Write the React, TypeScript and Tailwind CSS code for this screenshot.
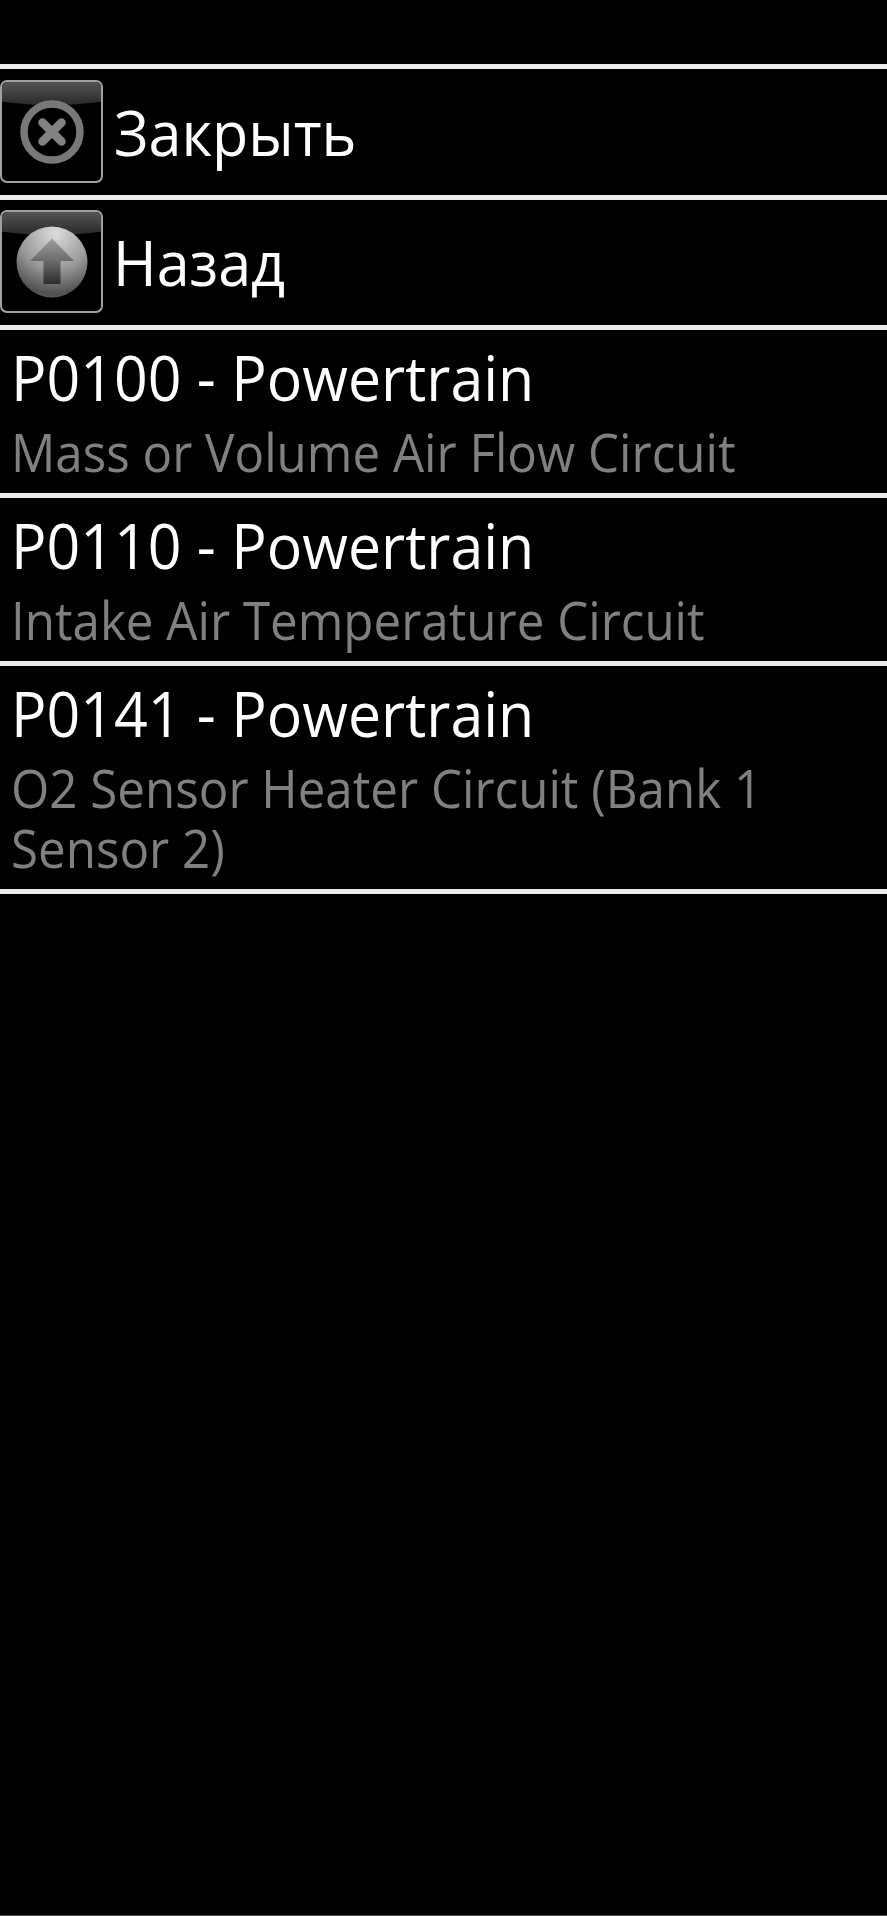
const rows = [
  { code: "P0100 - Powertrain", desc: "Mass or Volume Air Flow Circuit" },
  { code: "P0110 - Powertrain", desc: "Intake Air Temperature Circuit" },
  { code: "P0141 - Powertrain", desc: "O2 Sensor Heater Circuit (Bank 1 Sensor 2)" },
];

function CloseIcon() {
  return (
    <svg width="70" height="70" viewBox="0 0 70 70" className="blur-[0.5px]">
      <circle cx="35" cy="35" r="28" fill="none" stroke="#787878" strokeWidth="7.5" />
      <path d="M25.5 25.5 L44.5 44.5 M44.5 25.5 L25.5 44.5" stroke="#828282" strokeWidth="8.5" strokeLinecap="round" />
    </svg>
  );
}

function UpIcon() {
  return (
    <svg width="74" height="74" viewBox="0 0 74 74" className="blur-[0.5px]">
      <defs>
        <radialGradient id="ball" cx="0.55" cy="0.1" r="1">
          <stop offset="0" stopColor="#dcdcdc" />
          <stop offset="0.5" stopColor="#9a9a9a" />
          <stop offset="0.85" stopColor="#505050" />
          <stop offset="1" stopColor="#707070" />
        </radialGradient>
        <linearGradient id="arrow" x1="0" y1="0" x2="0" y2="1">
          <stop offset="0" stopColor="#a0a0a0" />
          <stop offset="0.5" stopColor="#6a6a6a" />
          <stop offset="1" stopColor="#2c2c2c" />
        </linearGradient>
      </defs>
      <circle cx="37" cy="37" r="35.5" fill="url(#ball)" />
      <path d="M37 13.5 L59 36 H45.5 V59 H28.5 V36 H15 Z" fill="url(#arrow)" />
    </svg>
  );
}

export default function App() {
  return (
    <div className="h-[1920px] flex flex-col bg-black font-['Open_Sans','Noto_Sans',sans-serif] overflow-hidden">
      <div className="h-[64px] border-b-[5px] border-[#ececec] box-content" />
      {[
        { label: "Закрыть", icon: <CloseIcon />, row: "h-[125px] pb-[1px]", gap: "ml-[11px]" },
        { label: "Назад", icon: <UpIcon />, row: "h-[123px] pb-[2px]", gap: "ml-[10px]" },
      ].map((item) => (
        <div key={item.label} className={`${item.row} border-b-[5px] border-[#ececec] box-content flex items-center`}>
          <div className="relative w-[103px] h-[103px] shrink-0 rounded-[7px] border-2 border-[#a0a0a0] bg-black overflow-hidden flex items-center justify-center">
            <div className="absolute left-[-80px] right-[-80px] top-[-60px] h-[83px] rounded-b-[50%] bg-gradient-to-b from-[#555] from-[72%] to-[#2a2a2a]" />
            <div className="relative">{item.icon}</div>
          </div>
          <span className={`${item.gap} text-[63px] text-white leading-none origin-left scale-x-[0.94]`}>{item.label}</span>
        </div>
      ))}
      {rows.map((row) => (
        <div key={row.code} className="border-b-[5px] border-[#ececec] pl-[11px] pt-[9px] pb-[11px]">
          <p className="text-[63px] leading-[75px] text-white origin-left scale-x-[0.937] w-[108%]">{row.code}</p>
          <p className="mt-[8px] text-[53px] leading-[60px] text-[#808080] origin-left scale-x-[0.93] w-[106%]">{row.desc}</p>
        </div>
      ))}
      <div className="flex-1" />
      <div className="h-[1px] bg-[#555]" />
      <div className="h-[4px] bg-white" />
    </div>
  );
}
